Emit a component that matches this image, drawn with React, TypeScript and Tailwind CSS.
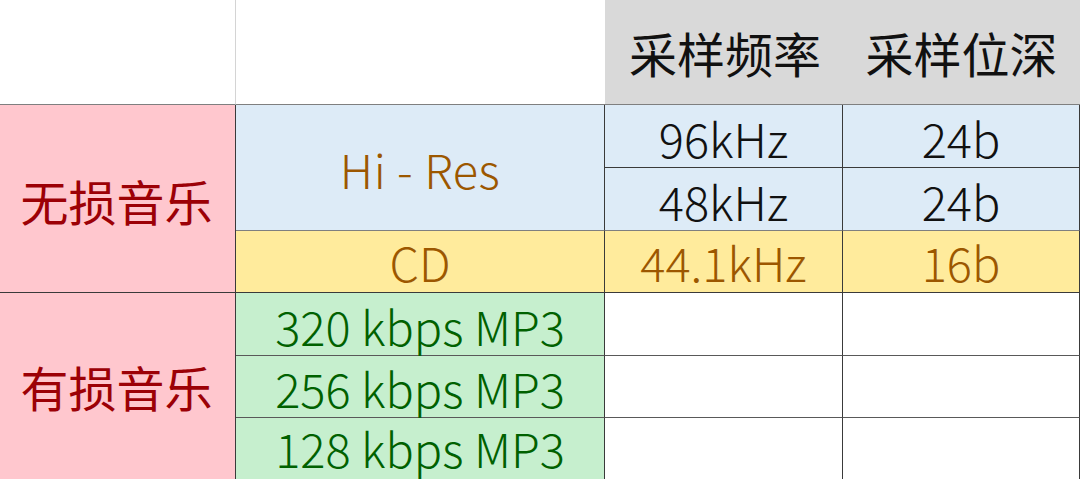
import React from "react";

const font = "font-['Noto_Sans_CJK_SC','Microsoft_YaHei',sans-serif]";

export default function App() {
    return (
        <div className={`w-[1080px] h-[479px] overflow-hidden bg-white ${font}`}>
            <div className="grid grid-cols-[236px_369px_238px_237px] grid-rows-[105px_63px_63px_62px_63px_62px_61px] text-[47px] leading-none font-light">
                {/* Header */}
                <div className="border-r border-b border-r-[#d4d4d4] border-b-[#7f7f7f] bg-white" />
                <div className="border-b border-b-[#7f7f7f] bg-white" />
                <div className="flex items-center justify-center border-b border-b-[#7f7f7f] bg-[#d9d9d9] text-[48px] font-normal text-[#111] pl-[2px]">
                    采样频率
                </div>
                <div className="flex items-center justify-center border-b border-b-[#7f7f7f] bg-[#d9d9d9] text-[48px] font-normal text-[#111]">
                    采样位深
                </div>

                {/* Lossless */}
                <div className="row-span-3 flex items-center justify-center border-r border-b border-[#3a3a3a] bg-[#ffc7ce] text-[48px] font-normal text-[#9c0006] pt-[2px] pr-[2px]">
                    无损音乐
                </div>
                <div className="row-span-2 flex items-center justify-center border-r border-b border-r-[#3a3a3a] border-b-[#7f7f7f] bg-[#ddebf7] text-[#9c5700] pt-[1px] tracking-[0.5px]">
                    Hi - Res
                </div>
                <div className="flex items-center justify-center border-r border-b border-[#3a3a3a] bg-[#ddebf7] text-[#111] pt-[2px]">
                    96kHz
                </div>
                <div className="flex items-center justify-center border-r border-b border-[#3a3a3a] bg-[#ddebf7] text-[#111] pt-[2px]">
                    24b
                </div>
                <div className="flex items-center justify-center border-r border-b border-r-[#3a3a3a] border-b-[#7f7f7f] bg-[#ddebf7] text-[#111] pt-[2px]">
                    48kHz
                </div>
                <div className="flex items-center justify-center border-r border-b border-r-[#3a3a3a] border-b-[#7f7f7f] bg-[#ddebf7] text-[#111] pt-[2px]">
                    24b
                </div>
                <div className="flex items-center justify-center border-r border-b border-[#3a3a3a] bg-[#ffeb9c] text-[#9c5700]">
                    CD
                </div>
                <div className="flex items-center justify-center border-r border-b border-[#3a3a3a] bg-[#ffeb9c] text-[#9c5700]">
                    44.1kHz
                </div>
                <div className="flex items-center justify-center border-r border-b border-[#3a3a3a] bg-[#ffeb9c] text-[#9c5700]">
                    16b
                </div>

                {/* Lossy */}
                <div className="row-span-3 flex items-center justify-center border-r border-[#3a3a3a] bg-[#ffc7ce] text-[48px] font-normal text-[#9c0006] pr-[2px]">
                    有损音乐
                </div>
                {["320 kbps MP3", "256 kbps MP3", "128 kbps MP3"].map((label, i) => (
                    <React.Fragment key={label}>
                        <div
                            className={`flex items-center justify-center border-r border-r-[#3a3a3a] bg-[#c6efce] text-[#006100] ${
                                i < 2 ? "border-b border-b-[#595959] pt-[2px]" : "pb-[2px]"
                            }`}
                        >
                            {label}
                        </div>
                        <div className={`border-r border-r-[#3a3a3a] bg-white ${i < 2 ? "border-b border-b-[#595959]" : ""}`} />
                        <div className={`border-r border-r-[#3a3a3a] bg-white ${i < 2 ? "border-b border-b-[#595959]" : ""}`} />
                    </React.Fragment>
                ))}
            </div>
        </div>
    );
}
